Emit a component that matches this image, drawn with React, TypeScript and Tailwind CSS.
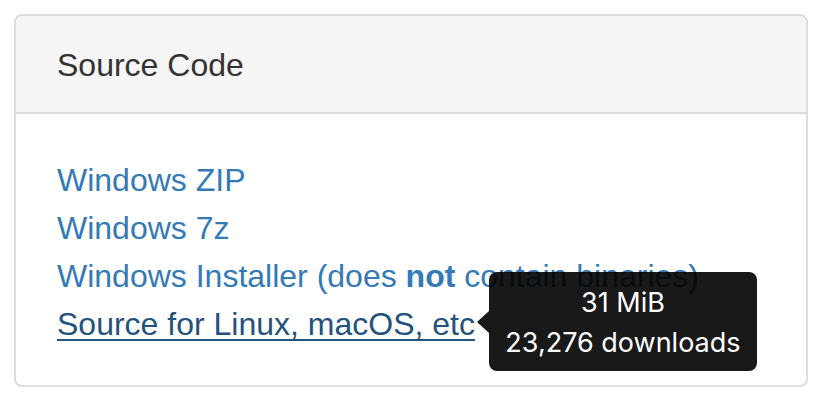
import React from "react";

export default function App() {
  return (
    <div className="w-[840px] h-[420px] bg-white pt-[14px] pl-[14px]" style={{ fontFamily: '"Liberation Sans", Arial, sans-serif' }}>
      <div className="w-[794px] border-2 border-[#dddddd] rounded-[8px] overflow-visible">
        <div className="h-[98px] bg-[#f5f5f5] border-b-2 border-[#dddddd] rounded-t-[6px] pl-[41px] pt-[25px]">
          <h3 className="text-[32px] leading-[48px] text-[#333333] font-normal">Source Code</h3>
        </div>
        <div className="pl-[41px] pt-[42px] pb-[37px]">
          <ul className="text-[32px] leading-[48px] text-[#337ab7]">
            <li>
              <a className="cursor-pointer">Windows ZIP</a>
            </li>
            <li>
              <a className="cursor-pointer">Windows 7z</a>
            </li>
            <li>
              <a className="cursor-pointer">
                Windows Installer (does <b className="font-bold">not</b> contain binaries)
              </a>
            </li>
            <li>
              <span className="relative inline-block">
                <a className="cursor-pointer text-[#23527c] underline decoration-2 underline-offset-[4px]">
                  Source for Linux, macOS, etc
                </a>
                <div className="absolute left-full top-[-28px] ml-[2px] flex items-center">
                  <div className="w-0 h-0 border-y-[11px] border-y-transparent border-r-[12px] border-r-black/90" />
                  <div
                    className="w-[268px] h-[99px] bg-black/90 rounded-[8px] text-white text-center text-[27px] leading-[40px] pt-[11px]"
                    style={{ fontFamily: 'Inter, "Liberation Sans", sans-serif' }}
                  >
                    <div>31 MiB</div>
                    <div>23,276 downloads</div>
                  </div>
                </div>
              </span>
            </li>
          </ul>
        </div>
      </div>
    </div>
  );
}
